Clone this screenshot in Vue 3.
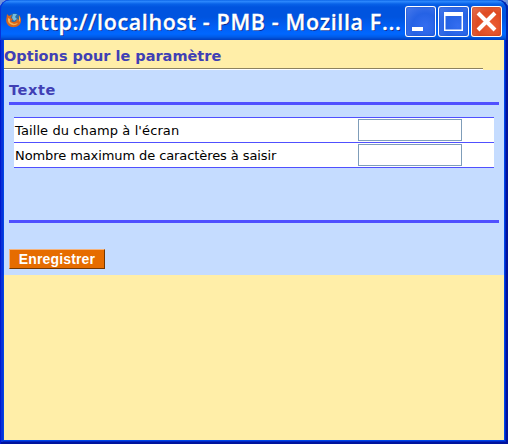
<script setup>
const fields = [
  { id: 'size', label: "Taille du champ à l'écran" },
  { id: 'max', label: 'Nombre maximum de caractères à saisir' },
]
</script>

<template>
  <div class="desktop">
    <div class="window">
      <header class="titlebar">
        <svg class="fox" viewBox="0 0 16 16">
          <circle cx="8.3" cy="7.2" r="6" fill="#286da8" />
          <path d="M7 2 11 2 9 5 11 7 8 9 6 6Z" fill="#75bddd" />
          <path d="M1 2 3 4 6 3 4.5 6 7 7 5 9C7 11 11 10 11 7L13 8 13 3C17 8 15 14 9 15 3 16-1 11 .5 6Z" fill="#d9651c" />
          <path d="M2 6 4 7 4 10 8 12 12 11C9 15 3 13 2 9ZM13 4C15 7 14 9 13 10Z" fill="#f5b455" />
        </svg>
        <h1 class="title">http://localhost - PMB - Mozilla F...</h1>
        <div class="controls">
          <button class="control" aria-label="Réduire">
            <svg viewBox="0 0 31 31"><path d="M7 21H18V25H7Z" fill="#fff" /></svg>
          </button>
          <button class="control" aria-label="Agrandir">
            <svg viewBox="0 0 31 31"><path d="M6 6H25V25H6ZM7 10V24H24V10Z" fill="#fff" fill-rule="evenodd" /><path d="M7 10V24H24V10" fill="none" stroke="#fff" stroke-width="1" /></svg>
          </button>
          <button class="control close" aria-label="Fermer">
            <svg viewBox="0 0 31 31"><path d="M7 7 24 24M24 7 7 24" stroke="#fff" stroke-width="4" /></svg>
          </button>
        </div>
      </header>
      <main class="page">
        <h2 class="heading"><span>Options pour le paramètre</span></h2>
        <div class="rule"></div>
        <form class="panel" @submit.prevent>
          <h3 class="subheading"><span>Texte</span></h3>
          <div class="content">
            <div class="table">
              <div v-for="field in fields" :key="field.id" class="row">
                <label :for="field.id" :class="['label', field.id]">{{ field.label }}</label>
                <input :id="field.id" class="input" type="text" />
              </div>
            </div>
          </div>
          <button class="save" type="submit"><span>Enregistrer</span></button>
        </form>
      </main>
    </div>
  </div>
</template>

<style>
body { margin: 0; overflow: hidden; }
</style>

<style scoped>
* { box-sizing: border-box; }
.desktop { width: 508px; height: 444px; background: #7393d8; }
.window {
  height: 444px;
  padding: 0 4px 4px;
  border-radius: 9px 9px 0 0;
  background: #0046e6;
  box-shadow: inset 1px 0 #0019cf, inset -2px -2px #00139c, inset 3px 0 #0831d9, inset -3px -3px #0025c5;
}
.titlebar {
  display: flex;
  align-items: flex-start;
  height: 40px;
  margin: 0 -4px;
  padding: 6px 6px 0;
  border-radius: 9px 9px 0 0;
  background: linear-gradient(#0058df 0, #2f8bff 1px, #2580f8 2px, #0862e8 4px, #0054df 7px, #0054df 17px, #0060f6 27px, #0067ff 34px, #005be7 37px, #003dbd 40px);
  box-shadow: inset 1px 0 #0831d9, inset -2px 0 #0022ac;
}
.fox { flex: none; width: 16px; height: 16px; margin-top: 6px; }
.title {
  width: 383px;
  margin: 0;
  padding-left: 4px;
  font: 600 21.5px/32px "Open Sans", sans-serif;
  letter-spacing: 0.62px;
  white-space: nowrap;
  color: #fff;
  -webkit-text-stroke: 0.3px #fff;
  text-shadow: 1px 1px #0b2c90;
}
.controls { display: flex; gap: 2px; }
.control {
  width: 31px;
  height: 31px;
  padding: 0;
  border: 0;
  border-radius: 3px;
  background: radial-gradient(circle at 65% 65%, #346df0 0, #2562e5 45%, #4d7dec 100%);
  box-shadow: inset 0 0 0 1px #fff, inset 0 0 2px 1px #194bbc;
}
.control svg { display: block; width: 31px; height: 31px; }
.close {
  background: radial-gradient(circle at 65% 65%, #ec6036 0, #df4b23 50%, #e57a5b 100%);
  box-shadow: inset 0 0 0 1px #fff, inset 0 0 2px 1px #b63a18;
}
.page { height: 400px; background: #ffeea8; font-family: "DejaVu Sans", sans-serif; }
.heading, .subheading { margin: 0; color: #4040b5; font-size: 14.5px; font-weight: bold; white-space: nowrap; }
.heading { height: 28px; line-height: 32px; letter-spacing: 0; }
.rule { width: 479px; height: 2px; border-top: 1px solid #8c8260; border-bottom: 1px solid #fff; }
.panel { height: 205px; padding: 0 5px; background: #c5dcff; }
.subheading { height: 32px; line-height: 40px; letter-spacing: 0.6px; }
.content { height: 121px; padding: 12px 5px 0; border: solid #5050ff; border-width: 3px 0; }
.table { border-top: 1px solid #5050ff; background: #fff; }
.row { display: flex; height: 25px; border-bottom: 1px solid #5050ff; padding: 1px; }
.label { width: 343px; font-size: 13px; line-height: 23px; white-space: nowrap; color: #000; }
.size { letter-spacing: 0.1px; }
.max { letter-spacing: -0.09px; }
.input { width: 104px; height: 22px; padding: 1px 3px; border: 1px solid #7f9db9; border-radius: 0; background: #fff; outline: 0; }
.save {
  display: block;
  width: 96px;
  height: 20px;
  margin-top: 26px;
  padding: 0;
  border: 1px solid;
  border-color: #f4b27b #733600 #733600 #f4b27b;
  border-radius: 0;
  background: #e66c00;
  color: #fff;
  font: bold 14px/19px "Liberation Sans", sans-serif;
  letter-spacing: 0.15px;
}
</style>
